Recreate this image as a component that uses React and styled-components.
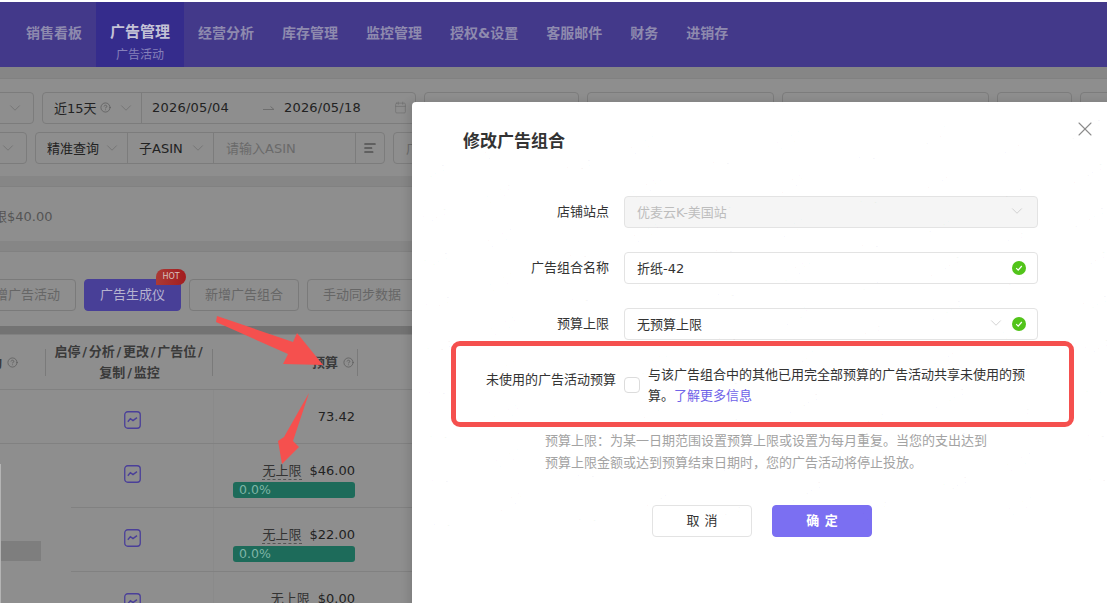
import React from "react";
import styled, { createGlobalStyle } from "styled-components";
import { ChevronDown, CircleHelp, Calendar, AlignLeft, X } from "lucide-react";

const GlobalStyle = createGlobalStyle`
  html, body {
    margin: 0;
    padding: 0;
    overflow: hidden;
    background: #8e8e8e;
  }
  * {
    box-sizing: border-box;
  }
  body {
    font-family: "DejaVu Sans", "Noto Sans CJK SC", sans-serif;
    font-size: 13px;
  }
`;

const Page = styled.div`
  position: relative;
  width: 1107px;
  height: 603px;
  overflow: hidden;
  background: #8e8e8e;
  border-top: 2px solid #fff;
`;

// top navigation
const Nav = styled.nav`
  display: flex;
  height: 65px;
  padding-left: 12px;
  background: #43398a;
`;

const NavItem = styled.div`
  display: flex;
  flex-direction: column;
  align-items: center;
  padding: ${(p) => (p.$active ? "19px 14px 0" : "20px 14px 0")};
  background: ${(p) => (p.$active ? "#352c8c" : "transparent")};
  color: ${(p) => (p.$active ? "#c4c2d6" : "#8e8aae")};
  font-size: ${(p) => (p.$active ? "15px" : "14px")};
  font-weight: 700;
  line-height: 22px;
  white-space: nowrap;
`;

const NavSub = styled.span`
  margin-top: 3px;
  font-size: 12px;
  font-weight: 400;
  line-height: 18px;
  color: #8680ba;
`;

const Band = styled.div`
  height: ${(p) => p.$h}px;
  background: ${(p) => p.$color || "#868686"};
  border-bottom: 1px solid #818181;
`;

// filter card
const FilterCard = styled.section`
  display: flex;
  flex-direction: column;
  gap: 8px;
  height: 97px;
  padding-top: 13px;
`;

const FilterRow = styled.div`
  display: flex;
  gap: 8px;
  margin-left: ${(p) => p.$offset}px;
`;

const Group = styled.div`
  display: flex;
  height: 32px;
  border: 1px solid #7c7c7c;
  border-radius: 4px;
  flex: none;
  width: ${(p) => p.$w}px;
`;

const Cell = styled.div`
  display: flex;
  align-items: center;
  justify-content: space-between;
  flex: none;
  width: ${(p) => p.$w}px;
  padding: 0 ${(p) => p.$pr ?? 10}px 1px ${(p) => p.$pl ?? 12}px;
  border-left: ${(p) => (p.$first ? "none" : "1px solid #7c7c7c")};
  color: ${(p) => p.$color || "#222"};
  white-space: nowrap;
`;

const DateCell = styled(Cell)`
  justify-content: flex-start;
  letter-spacing: 0.2px;
`;

const Chevron = styled(ChevronDown)`
  width: 18px;
  height: 18px;
  flex: none;
  stroke-width: 1;
  color: ${(p) => p.$color || "#6e6e6e"};
`;

const Hint = styled(CircleHelp)`
  width: 11px;
  height: 11px;
  flex: none;
  stroke-width: 1.4;
  color: #555;
`;

const PresetLabel = styled.span`
  display: flex;
  align-items: center;
  gap: 3px;
`;

const RangeArrow = styled.svg`
  flex: none;
  width: 12px;
  height: 8px;
  margin: 0 9px 0 34px;
  color: #6e6e6e;
`;

const CalendarIcon = styled(Calendar)`
  width: 13px;
  height: 13px;
  margin-left: auto;
  stroke-width: 1.2;
  color: #6e6e6e;
`;

const ListIcon = styled(AlignLeft)`
  width: 14px;
  height: 14px;
  color: #333;
  stroke-width: 1.8;
`;

// summary card
const SummaryCard = styled.section`
  display: flex;
  align-items: center;
  height: 54px;
  margin-left: -19px;
  padding-top: 3px;
  color: #555;
`;

// buttons card
const ActionCard = styled.section`
  display: flex;
  align-items: flex-start;
  gap: 8px;
  height: 74px;
  margin-left: -34px;
  padding-top: 27px;
`;

const ActionButton = styled.div`
  position: relative;
  flex: none;
  width: ${(p) => p.$w}px;
  height: 32px;
  border: 1px solid ${(p) => (p.$primary ? "#483f97" : "#7a7a7a")};
  border-radius: 4px;
  background: ${(p) => (p.$primary ? "#483f97" : "transparent")};
  color: ${(p) => (p.$primary ? "#b6b3cf" : "#666")};
  line-height: 30px;
  text-align: center;
`;

const HotBadge = styled.span`
  position: absolute;
  top: -11px;
  right: -6px;
  width: 30px;
  height: 16px;
  border-radius: 8px 8px 8px 0;
  background: linear-gradient(90deg, #ab3a35, #a31c1f);
  color: #d8c0bd;
  font-size: 8px;
  line-height: 16px;
  text-align: center;
`;

// table
const TableHead = styled.div`
  display: grid;
  grid-template-columns: 46px 167px 145px 1fr;
  height: 55px;
  border-bottom: 1px solid #818181;
  color: #3a3a3a;
  font-weight: 700;
`;

const HeadCell = styled.div`
  display: flex;
  align-items: center;
  justify-content: ${(p) => p.$justify || "center"};
  gap: 5px;
  position: relative;
  padding-right: ${(p) => p.$pr || 0}px;
  text-align: center;
  line-height: 21px;
  white-space: nowrap;
  &::after {
    content: "";
    position: absolute;
    right: 0;
    top: 14px;
    height: 27px;
    border-right: 1px solid #7a7a7a;
  }
`;

const HeadLast = styled.div``;

const Slash = styled.span`
  margin: 0 1.75px;
`;

const Row = styled.div`
  display: grid;
  grid-template-columns: ${(p) => p.$cols};
  height: ${(p) => p.$h}px;
  border-bottom: 1px solid #818181;
`;

const IconCell = styled.div`
  display: flex;
  justify-content: center;
  padding: 21px ${(p) => p.$pr || 0}px 0 ${(p) => p.$pl || 0}px;
`;

const BudgetCell = styled.div`
  display: flex;
  flex-direction: column;
  align-items: flex-end;
  padding: 18px 3px 0 0;
  border-left: 1px solid #8a8a8a;
  line-height: 18px;
  color: #222;
`;

const BudgetLine = styled.div`
  display: flex;
  gap: 8px;
`;

const NoLimit = styled.span`
  color: #333;
  border-bottom: 1px dashed #555;
  height: 18px;
`;

const ProgressBar = styled.div`
  width: 122px;
  height: 16px;
  margin-top: 2px;
  padding-left: 6px;
  border-radius: 3px;
  background: #1d6b5a;
  color: #7fb5a6;
  font-size: 12.5px;
  line-height: 16px;
`;

const Lower = styled.div`
  display: flex;
`;

const LeftPane = styled.div`
  flex: none;
  width: 71px;
  padding-top: 20px;
`;

const LeftFixed = styled.div`
  height: 200px;
  padding-top: 77px;
  border-left: 1px solid #b4b4b4;
`;

const Thumb = styled.div`
  width: 40px;
  height: 20px;
  background: #7e7e7e;
`;

const LowerRows = styled.div`
  flex: 1;
`;

// modal
const Modal = styled.div`
  position: absolute;
  left: 412px;
  top: 100px;
  width: 720px;
  height: 540px;
  padding: 26px 0 0 51px;
  background: #fff;
  border-radius: 4px;
  box-shadow: -3px 0 8px rgba(0, 0, 0, 0.12);
  overflow: hidden;
`;

const ModalTitle = styled.h2`
  margin: 0 0 44px;
  color: #333;
  font-family: "Noto Sans CJK SC", sans-serif;
  font-size: 17px;
  font-weight: 700;
  line-height: 24px;
`;

const CloseIcon = styled(X)`
  position: absolute;
  top: 15px;
  left: 661px;
  width: 24px;
  height: 24px;
  stroke-width: 1.1;
  color: #8c8c8c;
`;

const Field = styled.div`
  display: flex;
  align-items: center;
  margin-bottom: 24px;
`;

const Label = styled.label`
  flex: none;
  width: 161px;
  padding-right: ${(p) => p.$pr || 15}px;
  padding-bottom: ${(p) => p.$pb || 3}px;
  color: #333;
  text-align: right;
  white-space: nowrap;
`;

const Input = styled.div`
  display: flex;
  align-items: center;
  gap: 7px;
  width: 414px;
  height: 32px;
  padding: 0 11px 2px 12px;
  border: 1px solid #e3e3e3;
  border-radius: 4px;
  background: ${(p) => (p.$disabled ? "#f5f5f5" : "#fff")};
  color: ${(p) => (p.$disabled ? "#bdbdbd" : "#333")};
`;

const InputText = styled.span`
  flex: 1;
`;

const CheckIcon = styled.svg`
  width: 14px;
  height: 14px;
  flex: none;
  margin-top: 2px;
`;

const CheckBox = styled.span`
  flex: none;
  width: 16px;
  height: 16px;
  margin-right: 8px;
  border: 1px solid #dcdcdc;
  border-radius: 4px;
  background: #fff;
`;

const CheckText = styled.div`
  width: 384px;
  color: #333;
  line-height: 21px;
`;

const LearnMore = styled.a`
  color: #6f63e8;
`;

const HelpText = styled.p`
  width: 450px;
  margin: 0 0 31px 82px;
  color: #a3a3a3;
  line-height: 22px;
`;

const Footer = styled.div`
  display: flex;
  gap: 20px;
  margin-left: 189px;
`;

const FooterButton = styled.div`
  width: 100px;
  height: 32px;
  border: 1px solid ${(p) => (p.$primary ? "#7b6ff2" : "#e3e3e3")};
  border-radius: 4px;
  background: ${(p) => (p.$primary ? "#7b6ff2" : "#fff")};
  color: ${(p) => (p.$primary ? "#fff" : "#333")};
  font-weight: ${(p) => (p.$primary ? 700 : 400)};
  line-height: 30px;
  text-align: center;
  word-spacing: 1px;
`;

// faint user id repeated across the dialog
const Watermark = styled.div`
  position: absolute;
  inset: 0;
  display: flex;
  flex-direction: column;
  gap: 8px;
  padding-top: 8px;
  pointer-events: none;
  transform: rotate(-2deg);
`;

const MarkRow = styled.div`
  display: flex;
  margin-left: ${(p) => (p.$odd ? 0 : 73)}px;
`;

const Mark = styled.span`
  flex: none;
  width: 146px;
  color: rgba(0, 0, 0, 0.028);
  font-size: 12px;
  transform: rotate(-25deg);
`;

// red annotations drawn on top of the screenshot
const RedBox = styled.div`
  position: absolute;
  left: 451px;
  top: 339px;
  width: 623px;
  height: 86px;
  border: 5px solid #f5504e;
  border-radius: 9px;
  pointer-events: none;
`;

const Arrows = styled.svg`
  position: absolute;
  left: 0;
  top: -2px;
  pointer-events: none;
`;

const ChartIcon = () => (
  <svg width="17" height="18" viewBox="0 0 17 18" fill="none" stroke="#4a3f99">
    <rect x="0.75" y="0.75" width="15.5" height="16.5" rx="3" strokeWidth="1.3" />
    <path d="M3.8 10.8 6.4 7.6 9 9.6 13 6.6" strokeWidth="1.4" />
  </svg>
);

const OkIcon = () => (
  <CheckIcon viewBox="0 0 14 14">
    <circle cx="7" cy="7" r="7" fill="#52c41a" />
    <path d="M4.2 7.2 6.2 9.2 9.8 5" fill="none" stroke="#fff" strokeWidth="1.2" />
  </CheckIcon>
);

const navItems = ["销售看板", "广告管理", "经营分析", "库存管理", "监控管理", "授权&设置", "客服邮件", "财务", "进销存"];

const lowerRows = [
  { amount: "$46.00", h: 64, bar: true },
  { amount: "$22.00", h: 64, bar: true },
  { amount: "$0.00", h: 64, bar: false },
];

const markRows = Array.from({ length: 18 }, (_, i) => i);
const markCols = Array.from({ length: 6 }, (_, i) => i);

const App = () => (
  <Page>
    <GlobalStyle />
    <Nav>
      {navItems.map((name) => (
        <NavItem key={name} $active={name === "广告管理"}>
          {name}
          {name === "广告管理" && <NavSub>广告活动</NavSub>}
        </NavItem>
      ))}
    </Nav>
    <Band $h={12} />

    <FilterCard>
      <FilterRow $offset={-20}>
        <Group $w={54}>
          <Cell $first $w={52} $pr={9}>
            <span />
            <Chevron />
          </Cell>
        </Group>
        <Group $w={374}>
          <Cell $first $w={98} $pl={11} $pr={6}>
            <PresetLabel>
              近15天 <Hint />
            </PresetLabel>
            <Chevron />
          </Cell>
          <DateCell $w={274} $pl={10} $pr={8}>
            2026/05/04
            <RangeArrow viewBox="0 0 12 8" fill="none" stroke="currentColor">
              <path d="M0 5.5H11L7.5 2.5" strokeWidth="1" />
            </RangeArrow>
            2026/05/18
            <CalendarIcon />
          </DateCell>
        </Group>
        <Group $w={155} />
        <Group $w={187} />
        <Group $w={207} />
        <Group $w={75} />
        <Group $w={75} />
      </FilterRow>
      <FilterRow $offset={-20}>
        <Group $w={47}>
          <Cell $first $w={45} $pr={9}>
            <span />
            <Chevron />
          </Cell>
        </Group>
        <Group $w={350}>
          <Cell $first $w={91} $pl={11} $pr={6}>
            精准查询
            <Chevron />
          </Cell>
          <Cell $w={86} $pl={11} $pr={6}>
            子ASIN
            <Chevron />
          </Cell>
          <Cell $w={142} $color="#6a6a6a">
            请输入ASIN
          </Cell>
          <Cell $w={30} $pl={7} $pr={0}>
            <ListIcon />
          </Cell>
        </Group>
        <Group $w={200}>
          <Cell $first $w={100} $color="#6a6a6a">
            广告
          </Cell>
        </Group>
      </FilterRow>
    </FilterCard>

    <Band $h={11} />
    <SummaryCard>上限$40.00</SummaryCard>
    <Band $h={11} />

    <ActionCard>
      <ActionButton $w={110}>新增广告活动</ActionButton>
      <ActionButton $w={97} $primary>
        广告生成仪
        <HotBadge>HOT</HotBadge>
      </ActionButton>
      <ActionButton $w={110}>新增广告组合</ActionButton>
      <ActionButton $w={110}>手动同步数据</ActionButton>
    </ActionCard>
    <Band $h={9} $color="#737373" />

    <TableHead>
      <HeadCell $justify="flex-end" $pr={28}>
        <span>动</span>
        <Hint />
      </HeadCell>
      <HeadCell>
        <span>
          启停<Slash>/</Slash>分析<Slash>/</Slash>更改<Slash>/</Slash>广告位<Slash>/</Slash>
          <br />
          复制<Slash>/</Slash>监控
        </span>
      </HeadCell>
      <HeadCell $justify="flex-end" $pr={4}>
        预算
        <Hint />
      </HeadCell>
      <HeadLast />
    </TableHead>

    <Row $cols="213px 145px 1fr" $h={54}>
      <IconCell $pl={51}>
        <ChartIcon />
      </IconCell>
      <BudgetCell>73.42</BudgetCell>
    </Row>

    <Lower>
      <LeftPane>
        <LeftFixed>
          <Thumb />
        </LeftFixed>
      </LeftPane>
      <LowerRows>
        {lowerRows.map((row) => (
          <Row key={row.amount} $cols="142px 145px 1fr" $h={row.h}>
            <IconCell $pr={20}>
              <ChartIcon />
            </IconCell>
            <BudgetCell>
              <BudgetLine>
                <NoLimit>无上限</NoLimit>
                {row.amount}
              </BudgetLine>
              {row.bar && <ProgressBar>0.0%</ProgressBar>}
            </BudgetCell>
          </Row>
        ))}
      </LowerRows>
    </Lower>

    <Modal>
      <Watermark>
        {markRows.map((r) => (
          <MarkRow key={r} $odd={r % 2 === 1}>
            {markCols.map((c) => (
              <Mark key={c}>17185</Mark>
            ))}
          </MarkRow>
        ))}
      </Watermark>
      <CloseIcon />
      <ModalTitle>修改广告组合</ModalTitle>
      <Field>
        <Label>店铺站点</Label>
        <Input $disabled>
          <InputText>优麦云K-美国站</InputText>
          <Chevron $color="#c4c4c4" />
        </Input>
      </Field>
      <Field>
        <Label>广告组合名称</Label>
        <Input>
          <InputText>折纸-42</InputText>
          <OkIcon />
        </Input>
      </Field>
      <Field>
        <Label>预算上限</Label>
        <Input>
          <InputText>无预算上限</InputText>
          <Chevron $color="#c4c4c4" />
          <OkIcon />
        </Input>
      </Field>
      <Field>
        <Label $pr={8} $pb={13}>未使用的广告活动预算</Label>
        <CheckBox />
        <CheckText>
          与该广告组合中的其他已用完全部预算的广告活动共享未使用的预算。
          <LearnMore>了解更多信息</LearnMore>
        </CheckText>
      </Field>
      <HelpText>
        预算上限：为某一日期范围设置预算上限或设置为每月重复。当您的支出达到预算上限金额或达到预算结束日期时，您的广告活动将停止投放。
      </HelpText>
      <Footer>
        <FooterButton>取 消</FooterButton>
        <FooterButton $primary>确 定</FooterButton>
      </Footer>
    </Modal>

    <RedBox />
    <Arrows width="1107" height="603" viewBox="0 0 1107 603" fill="#f5504e">
      <path d="M217 316 L293 342 L297 333 L323 365 L283 364 L288 354 L216 322 Z" />
      <path d="M309 393 L293 441 L299 447 L282 464 L278 441 L284 437 Z" />
    </Arrows>
  </Page>
);

export default App;
